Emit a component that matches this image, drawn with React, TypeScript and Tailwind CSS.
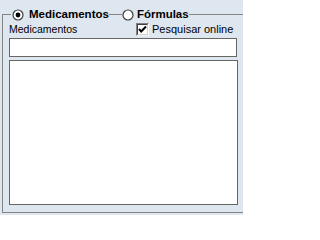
import React from "react";

function Radio({ checked }: { checked?: boolean }) {
  return (
    <svg width="12" height="12" viewBox="0 0 12 12" className="shrink-0">
      <circle cx="6" cy="6" r="5" fill="#ffffff" stroke="#3c3c3c" strokeWidth="1.2" />
      {checked && <circle cx="6" cy="6" r="2.4" fill="#000000" />}
    </svg>
  );
}

function CheckBox() {
  return (
    <div className="w-[13px] h-[13px] shrink-0 border-t border-l border-[#808080] border-r border-b border-r-white border-b-[#f0f0f0] bg-white">
      <div className="w-full h-full border-t border-l border-[#404040] border-r border-b border-r-[#d4d0c8] border-b-[#d4d0c8] flex items-center justify-center">
        <svg width="9" height="9" viewBox="0 0 9 9">
          <polyline points="1,4 3.2,6.5 8,1.5" fill="none" stroke="#000" strokeWidth="2" />
        </svg>
      </div>
    </div>
  );
}

export default function App() {
  return (
    <div
      className="w-[243px] h-[215px] bg-[#dee6f0] pt-[14px] pl-[2px] overflow-hidden"
      style={{ fontFamily: '"Liberation Sans", Arial, sans-serif' }}
    >
      <div className="w-[260px] h-[199px] border-l border-b border-[#858585] flex flex-col">
        {/* header */}
        <div className="h-[15px] -mt-[7px] flex items-center">
          <div className="w-[8px] h-px bg-[#858585]" />
          <div className="ml-[1px]">
            <Radio checked />
          </div>
          <span className="ml-[5px] text-[11.5px] font-bold text-black leading-none">Medicamentos</span>
          <div className="w-[13px] h-px bg-[#858585]" />
          <Radio />
          <span className="ml-[3px] text-[11.5px] font-bold text-black leading-none">Fórmulas</span>
          <div className="flex-1 h-px bg-[#858585]" />
        </div>
        {/* label row */}
        <div className="h-[15px] flex items-center pl-[6px]">
          <span className="w-[127px] text-[10.5px] text-black leading-none">Medicamentos</span>
          <CheckBox />
          <span className="ml-[3px] text-[11px] text-black leading-none">Pesquisar online</span>
        </div>
        <div className="ml-[6px] mt-[1px] w-[228px] h-[19px] bg-white border border-[#666666]" />
        <div className="ml-[6px] mt-[3px] w-[229px] h-[145px] bg-white border border-[#666666]" />
      </div>
    </div>
  );
}
